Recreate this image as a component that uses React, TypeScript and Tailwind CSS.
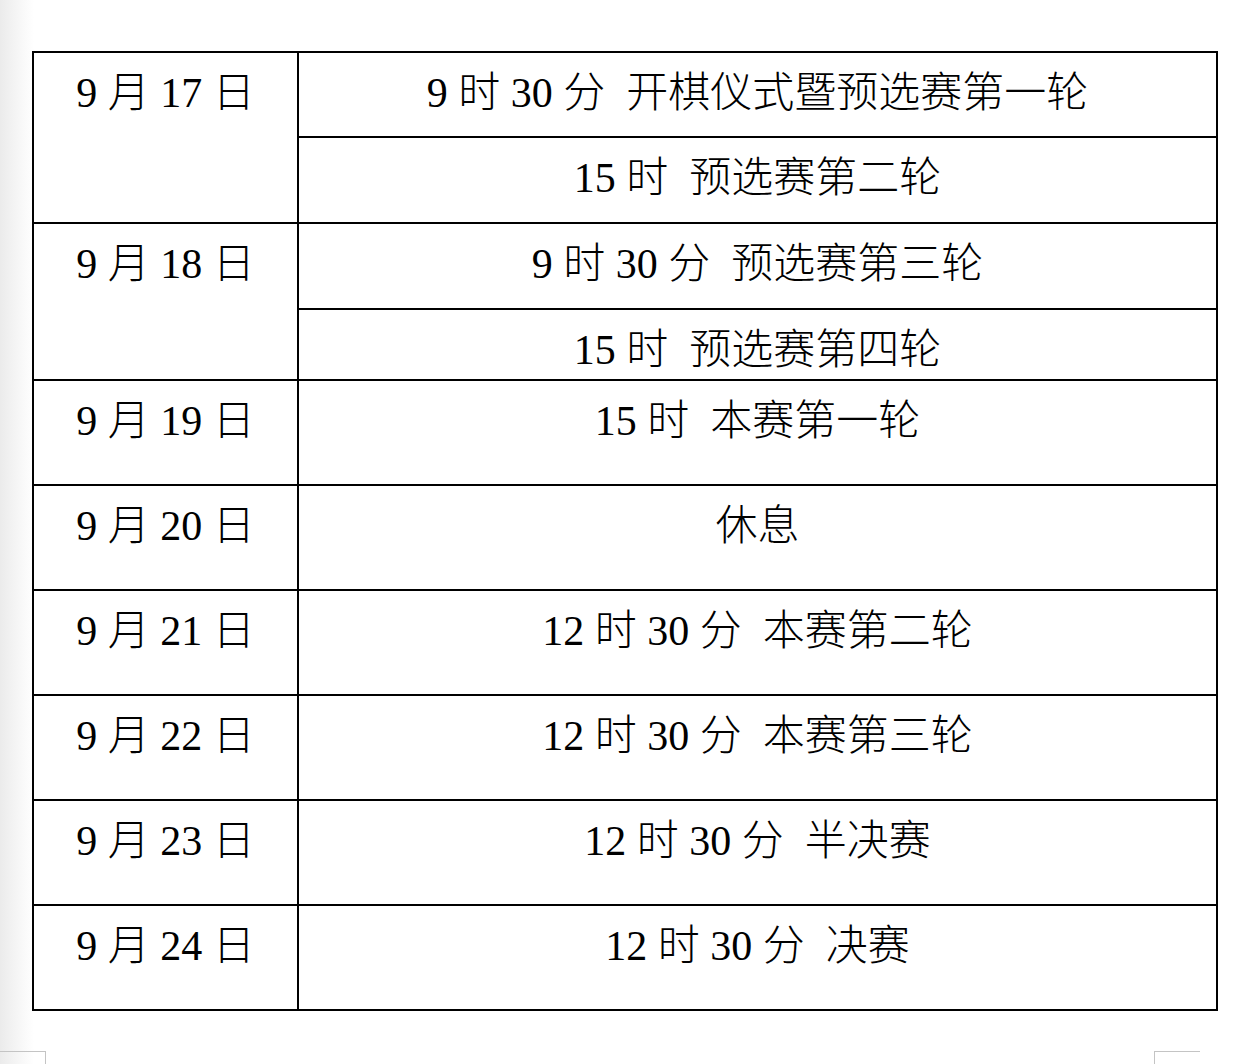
import React from "react";

const font = {
  fontFamily: '"Liberation Serif", "Noto Sans CJK SC", serif',
};

type Cell = { text: string; h: string };

const rows: { date: string; h: string; items: Cell[] }[] = [
  {
    date: "9 月 17 日",
    h: "h-[172px]",
    items: [
      { text: "9 时 30 分  开棋仪式暨预选赛第一轮", h: "h-[86px]" },
      { text: "15 时  预选赛第二轮", h: "h-[86px]" },
    ],
  },
  {
    date: "9 月 18 日",
    h: "h-[157px]",
    items: [
      { text: "9 时 30 分  预选赛第三轮", h: "h-[86px]" },
      { text: "15 时  预选赛第四轮", h: "h-[71px]" },
    ],
  },
  { date: "9 月 19 日", h: "h-[105px]", items: [{ text: "15 时  本赛第一轮", h: "h-[105px]" }] },
  { date: "9 月 20 日", h: "h-[105px]", items: [{ text: "休息", h: "h-[105px]" }] },
  { date: "9 月 21 日", h: "h-[105px]", items: [{ text: "12 时 30 分  本赛第二轮", h: "h-[105px]" }] },
  { date: "9 月 22 日", h: "h-[105px]", items: [{ text: "12 时 30 分  本赛第三轮", h: "h-[105px]" }] },
  { date: "9 月 23 日", h: "h-[105px]", items: [{ text: "12 时 30 分  半决赛", h: "h-[105px]" }] },
  { date: "9 月 24 日", h: "h-[105px]", items: [{ text: "12 时 30 分  决赛", h: "h-[105px]" }] },
];

export default function App() {
  return (
    <div className="w-[1250px] h-[1064px] overflow-hidden bg-[linear-gradient(to_right,#ebebeb_0px,#f6f6f6_18px,#ffffff_34px)]">
      <div className="h-[51px]" />
      <div
        className="ml-[32px] w-[1186px] border-t-2 border-l-2 border-black bg-white text-black font-light"
        style={font}
      >
        {rows.map((r, i) => (
          <div key={i} className="flex">
            <div
              className={`w-[265px] shrink-0 border-r-2 border-b-2 border-black pt-[15px] text-center text-[42px] leading-[50px] whitespace-pre ${i === 0 ? "h-[171px]" : r.h}`}
            >
              {r.date}
            </div>
            <div className="flex-1 flex flex-col">
              {r.items.map((c, j) => (
                <div
                  key={j}
                  className={`border-r-2 border-b-2 border-black pt-[15px] text-center text-[42px] leading-[50px] whitespace-pre ${i === 0 && j === 0 ? "h-[85px]" : c.h}`}
                >
                  {c.text}
                </div>
              ))}
            </div>
          </div>
        ))}
      </div>
      <div className="mt-[40px] w-[1200px] flex justify-between">
        <div className="w-[46px] h-[14px] border-t border-r border-[#c4c4c4]" />
        <div className="w-[46px] h-[14px] border-t border-l border-[#c4c4c4]" />
      </div>
    </div>
  );
}
